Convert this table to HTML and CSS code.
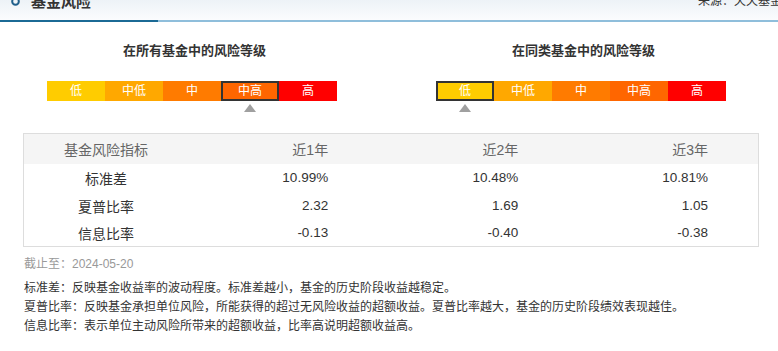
FILE: index.html
```html
<!DOCTYPE html>
<html lang="zh-CN">
<head>
<meta charset="utf-8">
<link rel="stylesheet" href="styles.css">
</head>
<body>
<div class="page">
  <div class="head">
    <div class="head-left">
      <svg class="ring" width="9" height="9" viewBox="0 0 9 9"><circle cx="4.5" cy="4.5" r="3.3" fill="none" stroke="#1f5f8b" stroke-width="2"/></svg>
      <span class="head-title">基金风险</span>
    </div>
    <span class="head-src">来源：天天基金</span>
  </div>
  <div class="head-line"></div>

  <div class="levels">
    <div class="level-col">
      <div class="level-title">在所有基金中的风险等级</div>
      <div class="bar">
        <div class="seg s1">低</div>
        <div class="seg s2">中低</div>
        <div class="seg s3">中</div>
        <div class="seg s4 sel">中高</div>
        <div class="seg s5">高</div>
      </div>
      <div class="marks">
        <div class="mark"></div><div class="mark"></div><div class="mark"></div>
        <div class="mark"><span class="tri"></span></div><div class="mark"></div>
      </div>
    </div>
    <div class="level-col">
      <div class="level-title">在同类基金中的风险等级</div>
      <div class="bar">
        <div class="seg s1 sel">低</div>
        <div class="seg s2">中低</div>
        <div class="seg s3">中</div>
        <div class="seg s4">中高</div>
        <div class="seg s5">高</div>
      </div>
      <div class="marks">
        <div class="mark"><span class="tri"></span></div><div class="mark"></div><div class="mark"></div>
        <div class="mark"></div><div class="mark"></div>
      </div>
    </div>
  </div>

  <table class="risk">
    <thead>
      <tr><th class="c1">基金风险指标</th><th>近1年</th><th>近2年</th><th>近3年</th></tr>
    </thead>
    <tbody>
      <tr class="r1"><td class="c1">标准差</td><td>10.99%</td><td>10.48%</td><td>10.81%</td></tr>
      <tr class="r2"><td class="c1">夏普比率</td><td>2.32</td><td>1.69</td><td>1.05</td></tr>
      <tr class="r3"><td class="c1">信息比率</td><td>-0.13</td><td>-0.40</td><td>-0.38</td></tr>
    </tbody>
  </table>

  <div class="date">截止至：2024-05-20</div>
  <div class="notes">
    <p>标准差：反映基金收益率的波动程度。标准差越小，基金的历史阶段收益越稳定。</p>
    <p>夏普比率：反映基金承担单位风险，所能获得的超过无风险收益的超额收益。夏普比率越大，基金的历史阶段绩效表现越佳。</p>
    <p>信息比率：表示单位主动风险所带来的超额收益，比率高说明超额收益高。</p>
  </div>
</div>
</body>
</html>
```

FILE: styles.css
```css
html, body {
  margin: 0;
  padding: 0;
  background: #fff;
}
body {
  font-family: "Liberation Sans", "Noto Sans CJK SC", sans-serif;
  color: #333;
  overflow: hidden;
}
.page {
  width: 778px;
}
.head {
  height: 20px;
  display: flex;
  justify-content: space-between;
  align-items: flex-end;
  background: linear-gradient(#edf2f7, #fbfcfe);
  overflow: hidden;
}
.head-left {
  display: flex;
  align-items: flex-end;
  margin-bottom: 9px;
}
.ring {
  margin-left: 11px;
  margin-bottom: 5px;
}
.head-title {
  margin-left: 11px;
  font-size: 15px;
  font-weight: bold;
  line-height: 18px;
  color: #333;
}
.head-src {
  font-size: 12px;
  line-height: 16px;
  margin-bottom: 11px;
  margin-right: -4px;
  white-space: nowrap;
  color: #333;
}
.head-line {
  height: 2px;
  background: linear-gradient(to right, #1b6a95 0, #1b6a95 158px, #8fbedb 158px, #8fbedb 100%);
}
.levels {
  display: flex;
}
.level-col {
  width: 390px;
  display: flex;
  flex-direction: column;
}
.level-title {
  margin-top: 19px;
  height: 20px;
  line-height: 20px;
  font-size: 13px;
  font-weight: bold;
  text-align: center;
  color: #333;
}
.bar {
  margin-top: 20px;
  margin-left: 47px;
  display: flex;
  height: 20px;
}
.seg {
  width: 58px;
  height: 20px;
  box-sizing: border-box;
  line-height: 20px;
  text-align: center;
  font-size: 12px;
  color: #fff;
}
.s1 { background: #ffcc00; }
.s2 { background: #ffa800; }
.s3 { background: #ff7b00; }
.s4 { background: #ff6600; }
.s5 { background: #ff0000; }
.seg.sel {
  border: 2px solid #333;
  line-height: 16px;
}
.marks {
  margin-left: 47px;
  margin-top: 3px;
  display: flex;
  height: 8px;
}
.mark {
  width: 58px;
  display: flex;
  justify-content: center;
}
.tri {
  width: 0;
  height: 0;
  border-left: 6px solid transparent;
  border-right: 6px solid transparent;
  border-bottom: 8px solid #a0a0a0;
}
.risk {
  margin-top: 21px;
  margin-left: 23px;
  width: 736px;
  border-collapse: collapse;
  border: 1px solid #dddddd;
  font-size: 14px;
  table-layout: fixed;
}
.risk th, .risk td {
  padding: 0 50px 0 0;
  text-align: right;
  font-weight: normal;
}
.risk .c1 {
  width: 164px;
  padding: 0;
  text-align: center;
}
.risk thead tr {
  height: 30px;
  background: #f5f5f5;
  color: #666;
}
.risk tbody td {
  font-size: 13.5px;
  color: #333;
}
.risk tbody td.c1 {
  font-size: 14px;
}
.risk .r1 { height: 28px; }
.risk .r2 { height: 28px; }
.risk .r3 { height: 27px; }
.date {
  margin-top: 7px;
  margin-left: 24px;
  font-size: 12px;
  line-height: 20px;
  color: #999;
}
.notes {
  margin-top: 5px;
  margin-left: 24px;
  font-size: 12px;
  line-height: 19px;
  color: #333;
}
.notes p {
  margin: 0;
}
```
